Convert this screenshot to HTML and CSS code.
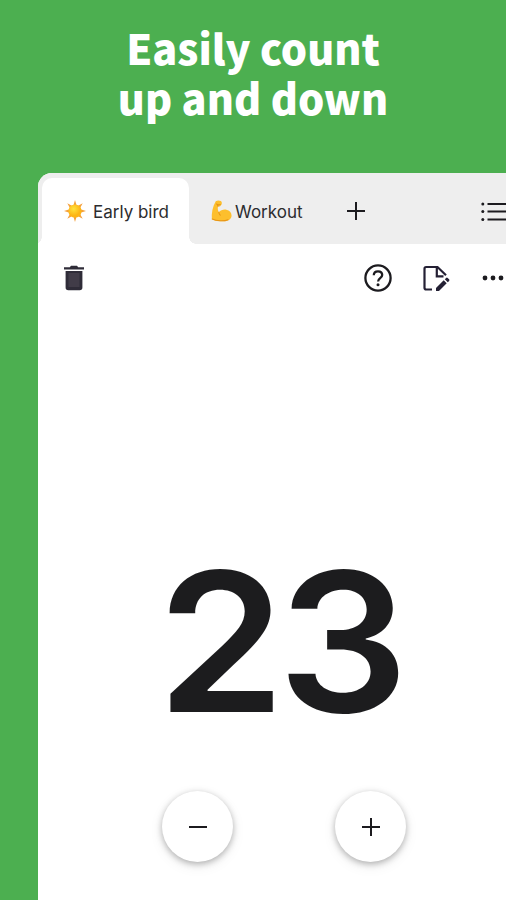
FILE: index.html
```
<!DOCTYPE html>
<html lang="en">
<head>
<meta charset="utf-8">
<title>Easily count up and down</title>
<link rel="stylesheet" href="styles.css">
</head>
<body>
<main class="promo">
  <h1 class="headline">Easily count<br>up and down</h1>
  <section class="app">
    <nav class="tabs">
      <div class="tab active">
        <svg class="sun" viewBox="0 0 20 20"><defs><radialGradient id="sunFill" cx=".4" cy=".35"><stop offset="0" stop-color="#ffe23c"/><stop offset="1" stop-color="#fdb515"/></radialGradient></defs><path fill="#f5a13c" d="M10 0l1.500 5h-3zM10 20l1.500-5h-3zM0 10l5-1.500v3zM20 10l-5-1.500v3zM3 3l4.600 2.500-2.100 2.100zM17 3l-4.600 2.500 2.100 2.100zM3 17l4.600-2.500-2.100-2.100zM17 17l-4.600-2.500 2.100-2.100z"/><circle cx="10" cy="10" r="6" fill="url(#sunFill)"/></svg>
        <span class="label">Early bird</span>
      </div>
      <div class="tab workout">
        <svg class="arm" viewBox="0 0 20 21"><path fill="#fdbf2d" d="M4.500 1.200C6 .1 8 .2 9.400 1c1.100.8 1.200 2.300.5 3.600L8.700 5.900c-.8.5-1.500.3-2 .1C6.200 8 6.500 10 7.400 11.700c1.800-2 4.400-3 7.200-2.500 3.200.5 5 2.700 5 5.600 0 3.900-3.600 5.500-8.100 5.500-4.300 0-8.300-.5-10.700-2C.3 13 1.500 6 4.500 1.200z"/><path fill="none" stroke="#e79518" stroke-width="1" stroke-linecap="round" d="M1.200 18.200c4 2 11.500 2.200 15 .6M7.400 11.700c.2 1.200.6 2 1.400 2.800M5.200 3.800c1 .9 2.500 1 3.600.5M6.700 6L6 4.500"/></svg>
        <span class="label">Workout</span>
      </div>
      <svg class="add" viewBox="0 0 20 20"><path d="M10 1v18M1 10h18"/></svg>
      <svg class="list" viewBox="0 0 30 20"><path d="M6.500 2H30M6.500 9.500H30M6.500 17.500H30"/><g><circle cx="1.800" cy="2" r="1.500"/><circle cx="1.800" cy="9.500" r="1.500"/><circle cx="1.800" cy="17.500" r="1.500"/></g></svg>
    </nav>
    <div class="toolbar">
      <svg class="trash" viewBox="0 0 20 26"><path fill="#2f2c38" d="M0 2.200h5.800L7 .8h6l1.200 1.400H20v2.300H0zM1.600 6h16.800v16.500q0 2.700-2.700 2.700H4.300q-2.700 0-2.700-2.700z"/><path fill="#413c48" d="M4.500 8h11v14h-11z"/></svg>
      <svg class="help" viewBox="0 0 28 28"><circle cx="14" cy="14" r="12.600"/><path d="M9.800 11.300c0-2.400 1.700-4 4.200-4s4.200 1.600 4.200 3.800c0 3-4.100 3.200-4.100 6.300"/><circle class="dot" cx="14" cy="20.700" r="1.500"/></svg>
      <svg class="note" viewBox="0 0 28 26"><path d="M9 24H3.200Q1.500 24 1.500 22.300V3.200Q1.500 1.500 3.200 1.500H14.500L23 9.800M13.800 2V10.800H20.500"/><path class="pencil" d="M13 25.500v-3l7.700-7.700 3 3-7.700 7.700zM21.800 13.700l1.300-1.300q.8-.7 1.600 0l1.400 1.400q.7.800 0 1.600l-1.300 1.300z"/></svg>
      <svg class="more" viewBox="0 0 24 6"><circle cx="3" cy="3" r="2.400"/><circle cx="11" cy="3" r="2.400"/><circle cx="19" cy="3" r="2.400"/></svg>
    </div>
    <div class="count">23</div>
    <div class="controls">
      <button class="round" aria-label="Decrease"><svg viewBox="0 0 20 20"><path d="M1 10h18"/></svg></button>
      <button class="round" aria-label="Increase"><svg viewBox="0 0 20 20"><path d="M10 1v18M1 10h18"/></svg></button>
    </div>
  </section>
</main>
</body>
</html>
```
FILE: styles.css
```
* { box-sizing: border-box; }
body { margin: 0; }
svg { display: block; flex: none; }
.promo {
  width: 506px;
  height: 900px;
  overflow: hidden;
  background: #4caf50;
  display: flex;
  flex-direction: column;
}
.headline {
  margin: 0;
  height: 173px;
  padding-top: 22px;
  flex: none;
  color: #fff;
  text-align: center;
  font: 900 41.400px/50px "Noto Sans CJK JP", sans-serif;
}
.app {
  margin-left: 38px;
  flex: 1;
  background: #fff;
  border-radius: 14px 0 0 0;
  overflow: hidden;
  font-family: Inter, sans-serif;
  color: #1c1c1e;
}
.tabs {
  display: flex;
  height: 71px;
  padding: 5px 0 0 4px;
  background: #eee;
}
.tab { display: flex; flex: none; align-items: center; height: 66px; }
.label { font-size: 17px; line-height: 20px; white-space: nowrap; position: relative; top: 1px; color: #2c2c2e; }
.active {
  position: relative;
  width: 147px;
  padding-left: 22px;
  background: #fff;
  border-radius: 10px 10px 0 0;
}
.active::before, .active::after {
  content: "";
  position: absolute;
  bottom: 0;
  width: 7px;
  height: 7px;
}
.active::before { left: -7px; background: radial-gradient(circle at 0 0, #eee 6.500px, #fff 7px); }
.active::after { right: -7px; background: radial-gradient(circle at 100% 0, #eee 6.500px, #fff 7px); }
.sun { width: 22px; height: 22px; margin-right: 7px; }
.workout { padding-left: 22px; }
.arm { width: 21px; height: 22px; margin-right: 3px; }
.workout .label { width: 69px; }
.add { width: 20px; height: 20px; margin: 23px 0 0 42px; }
.list { width: 30px; height: 20px; margin: 24px 0 0 115px; fill: #1c1b1f; }
.add path, .list path, .round path { stroke: #1c1b1f; stroke-width: 2; fill: none; }
.toolbar {
  display: flex;
  align-items: center;
  height: 69px;
  padding: 0 0 1px 26px;
}
.trash { width: 20px; height: 26px; }
.help { width: 28px; height: 28px; margin-left: 280px; fill: none; stroke: #1c1b1f; stroke-width: 2.300; }
.help .dot { fill: #1c1b1f; stroke: none; }
.note { width: 28px; height: 27px; margin-left: 31px; fill: none; stroke: #242034; stroke-width: 2.200; }
.note .pencil { fill: #242034; stroke: none; }
.more { width: 24px; height: 6px; margin-left: 31px; fill: #1c1b1f; }
.count {
  width: 260px;
  height: 240px;
  margin: 209px 0 0 119px;
  font-size: 194px;
  font-weight: 620;
  line-height: 240px;
  letter-spacing: -7px;
  white-space: nowrap;
  transform: scaleX(1.06);
  transform-origin: 0 50%;
}
.controls { display: flex; gap: 102px; margin: 29px 0 0 124px; }
.round {
  width: 71px;
  height: 71px;
  padding: 0;
  border: 0;
  border-radius: 50%;
  background: #fff;
  display: flex;
  align-items: center;
  justify-content: center;
  box-shadow: 0 2px 6px rgba(0, 0, 0, .28), 0 4px 14px rgba(0, 0, 0, .08);
}
.round svg { width: 20px; height: 20px; }
```
